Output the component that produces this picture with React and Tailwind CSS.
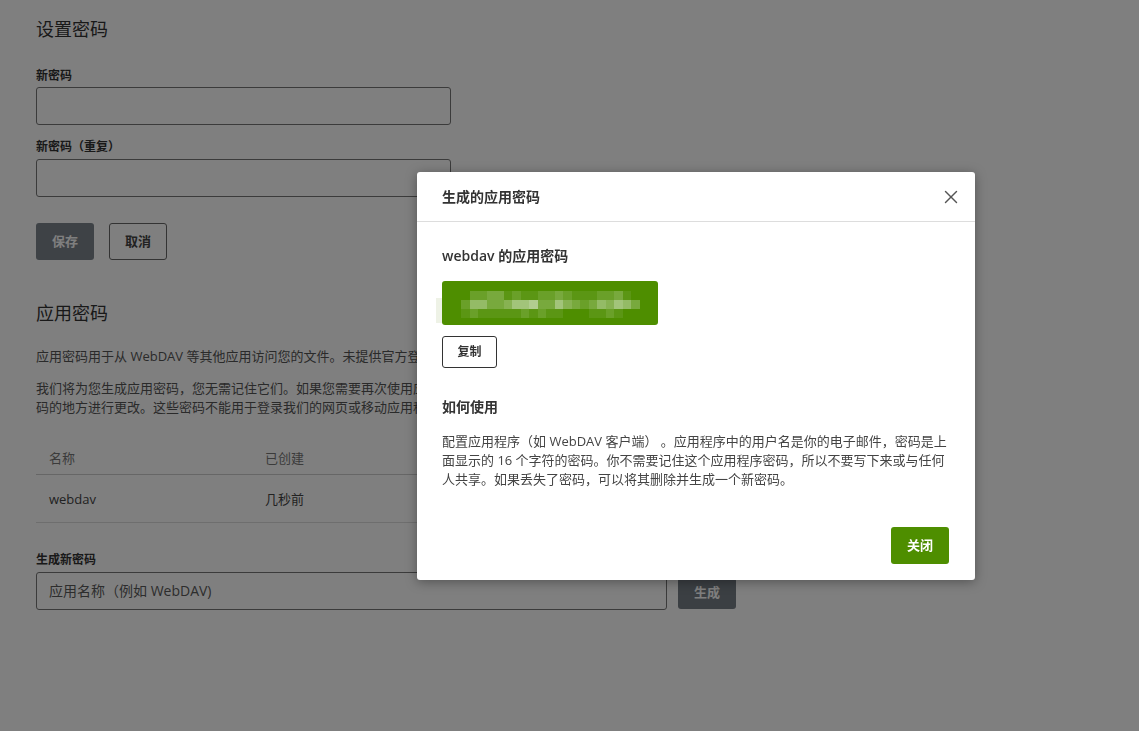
import { X } from "lucide-react";

const font = { fontFamily: '"Open Sans", "Noto Sans CJK SC", sans-serif' };

// blurred secret: white cells of varying strength over the green box
const mosaic = [
  "022331211223211122310",
  "255334667336432354653",
  "121111121211000112100",
];

const PasswordMosaic = () => (
  <div className="relative">
    <div className="absolute -left-[6px] top-[17px] h-[25px] w-[6px] bg-[#eef2e6]" />
    <div className="h-[44px] w-[216px] rounded-[3px] bg-[#4e8e00] pl-[19px] pt-[10px]">
      {mosaic.map((row, r) => (
        <div key={r} className="flex">
          {row.split("").map((d, c) => (
            <div
              key={c}
              className="h-[9px] w-[8.5px] bg-white"
              style={{ opacity: Number(d) * 0.08 }}
            />
          ))}
        </div>
      ))}
    </div>
  </div>
);

const GeneratedDialog = () => (
  <div className="absolute left-[417px] top-[172px] w-[558px] rounded-[3px] bg-white shadow-[0_2px_12px_rgba(0,0,0,0.35)]">
    <div className="flex h-[50px] items-center justify-between border-b border-[#dddddd] pl-[25px] pr-[13px]">
      <h2 className="text-[14px] font-semibold text-[#333]">生成的应用密码</h2>
      <X size={22} strokeWidth={1.5} className="text-[#555]" />
    </div>
    <div className="px-[25px] pt-[24px]">
      <h3 className="text-[14px] font-semibold leading-[20px] text-[#333]">webdav 的应用密码</h3>
      <div className="mt-[15px]">
        <PasswordMosaic />
      </div>
      <button className="mt-[11px] h-[32px] w-[55px] rounded-[3px] border border-[#333] text-[12px] font-bold text-[#333]">
        复制
      </button>
      <h3 className="mt-[29px] text-[14px] font-bold leading-[20px] text-[#333]">如何使用</h3>
      <p className="mt-[15px] text-[13px] leading-[19px] text-[#444]">
        配置应用程序（如 WebDAV 客户端） 。应用程序中的用户名是你的电子邮件，密码是上面显示的 16 个字符的密码。你不需要记住这个应用程序密码，所以不要写下来或与任何人共享。如果丢失了密码，可以将其删除并生成一个新密码。
      </p>
      <div className="flex justify-end pb-4 pt-[38px]">
        <button className="mr-px h-[37px] w-[58px] rounded-[3px] bg-[#4e8e00] text-[13px] font-bold text-white">
          关闭
        </button>
      </div>
    </div>
  </div>
);

export default function App() {
  return (
    <div className="relative min-h-screen bg-white text-[#333]" style={font}>
      <div className="ml-9 w-[700px] pt-4">
        <h1 className="text-[18px] leading-[26px]">设置密码</h1>

        <label className="mt-[25px] block text-[12px] font-bold leading-[18px]">新密码</label>
        <input type="password" className="mt-[2px] block h-[38px] w-[415px] rounded-[3px] border border-[#777]" />

        <label className="mt-[13px] block text-[12px] font-bold leading-[18px]">新密码（重复）</label>
        <input type="password" className="mt-[3px] block h-[38px] w-[415px] rounded-[3px] border border-[#777]" />

        <div className="mt-[26px] flex gap-[15px]">
          <button className="h-[37px] w-[58px] rounded-[3px] bg-[#7c848c] text-[13px] font-bold text-white">保存</button>
          <button className="h-[37px] w-[58px] rounded-[3px] border border-[#666] text-[13px] font-bold text-[#444]">取消</button>
        </div>

        <h1 className="mt-10 text-[18px] leading-[26px]">应用密码</h1>
        <p className="mt-[21px] text-[13px] leading-[19px] text-[#555]">
          应用密码用于从 WebDAV 等其他应用访问您的文件。未提供官方登录支持的应用可使用它访问。
        </p>
        <p className="mt-[13px] text-[13px] leading-[19px] text-[#555]">
          我们将为您生成应用密码，您无需记住它们。如果您需要再次使用应用程序，只需删除旧密码并在输入密
          <br />
          码的地方进行更改。这些密码不能用于登录我们的网页或移动应用程序。
        </p>

        <table className="mt-[23px] w-full text-left text-[13px]">
          <thead>
            <tr className="h-[34px] border-b border-[#cccccc] text-[#777]">
              <th className="w-[216px] pl-[13px] pt-[4px] font-normal">名称</th>
              <th className="pl-[13px] pt-[4px] font-normal">已创建</th>
              <th className="font-normal" />
            </tr>
          </thead>
          <tbody>
            <tr className="h-[48px] border-b border-[#dddddd] text-[#444]">
              <td className="pl-[13px] pt-[4px]">webdav</td>
              <td className="pl-[13px] pt-[4px]">几秒前</td>
              <td />
            </tr>
          </tbody>
        </table>

        <label className="mt-[28px] block text-[12px] font-bold leading-[18px]">生成新密码</label>
        <div className="mt-[3px] flex items-end gap-[11px]">
          <input
            placeholder="应用名称（例如 WebDAV)"
            className="h-[38px] w-[631px] rounded-[3px] border border-[#777] px-3 text-[14px] placeholder:text-[#5a5a5a]"
          />
          <button className="mb-px h-[31px] w-[58px] rounded-[3px] bg-[#767e86] text-[13px] font-bold text-white">生成</button>
        </div>
      </div>

      <div className="fixed inset-0 bg-black/50" />
      <GeneratedDialog />
    </div>
  );
}
